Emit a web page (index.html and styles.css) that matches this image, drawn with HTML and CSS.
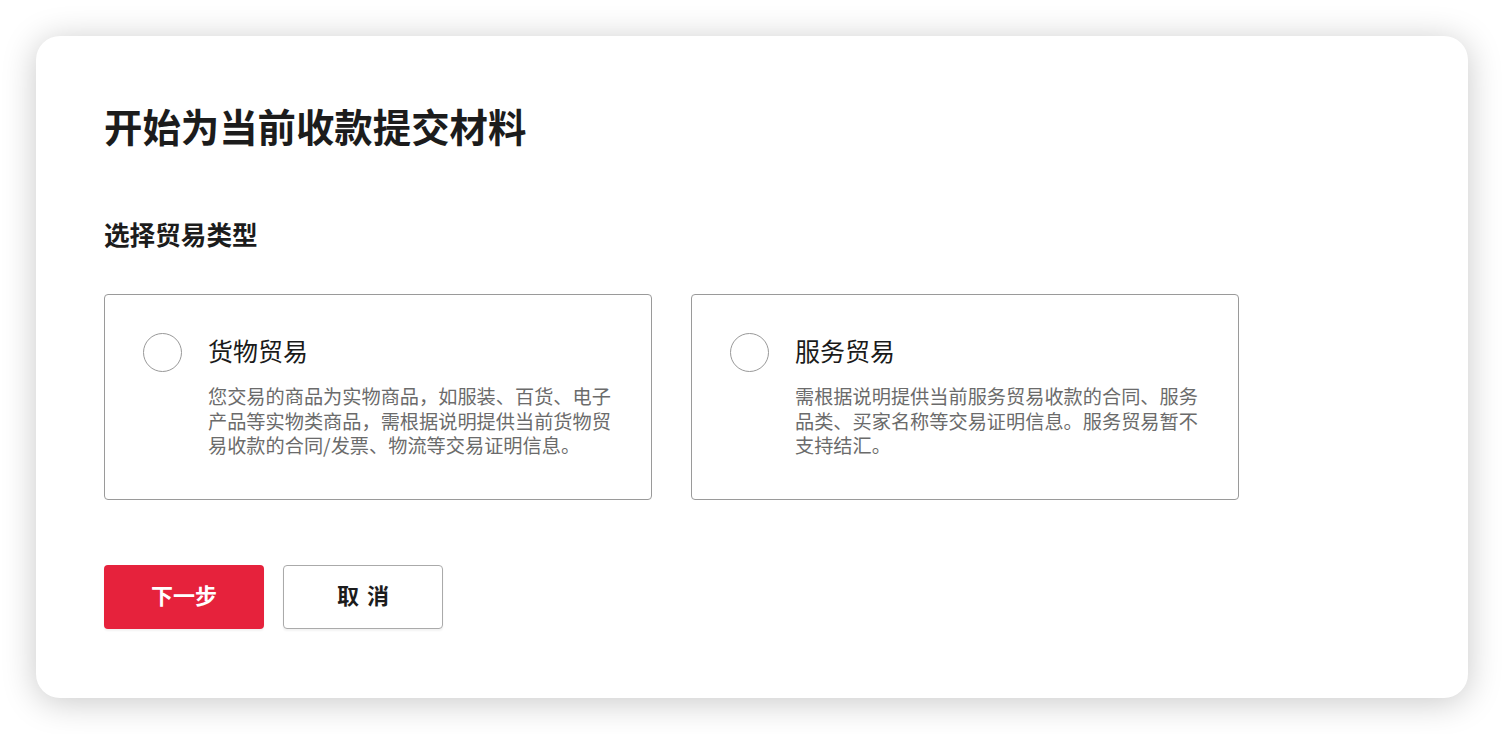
FILE: index.html
```html
<!DOCTYPE html>
<html lang="zh-CN">
<head>
<meta charset="utf-8">
<title>开始为当前收款提交材料</title>
<link rel="stylesheet" href="styles.css">
</head>
<body>
<div class="dialog">
  <h1 class="title">开始为当前收款提交材料</h1>
  <h2 class="subtitle">选择贸易类型</h2>
  <div class="options">
    <label class="option">
      <span class="radio"></span>
      <span class="option-body">
        <span class="option-label">货物贸易</span>
        <span class="option-desc">您交易的商品为实物商品，如服装、百货、电子产品等实物类商品，需根据说明提供当前货物贸易收款的合同/发票、物流等交易证明信息。</span>
      </span>
    </label>
    <label class="option">
      <span class="radio"></span>
      <span class="option-body">
        <span class="option-label">服务贸易</span>
        <span class="option-desc">需根据说明提供当前服务贸易收款的合同、服务品类、买家名称等交易证明信息。服务贸易暂不支持结汇。</span>
      </span>
    </label>
  </div>
  <div class="actions">
    <button class="btn btn-primary">下一步</button>
    <button class="btn btn-default">取 消</button>
  </div>
</div>
</body>
</html>
```

FILE: styles.css
```css
html, body {
  margin: 0;
  padding: 0;
  background: #ffffff;
}
body {
  padding: 36px;
  font-family: "Noto Sans CJK SC", "Noto Sans", sans-serif;
  color: #1a1a1a;
}
.dialog {
  box-sizing: border-box;
  width: 1432px;
  height: 662px;
  background: #ffffff;
  border-radius: 24px;
  box-shadow: 0 4px 34px rgba(0, 0, 0, 0.22);
  padding: 65px 68px 0;
}
.title {
  margin: 0;
  font-size: 38.4px;
  line-height: 48px;
  font-weight: 700;
  color: #1c1c1c;
}
.subtitle {
  margin: 68px 0 0;
  font-size: 25.6px;
  line-height: 34px;
  font-weight: 700;
  color: #1c1c1c;
}
.options {
  display: flex;
  gap: 39px;
  margin-top: 43px;
}
.option {
  box-sizing: border-box;
  width: 548px;
  height: 206px;
  border: 1px solid #9a9a9a;
  border-radius: 4px;
  padding: 38px 16px 0 38px;
  display: flex;
  gap: 26px;
  cursor: pointer;
}
.radio {
  flex: none;
  box-sizing: border-box;
  width: 39px;
  height: 39px;
  border: 1px solid #999;
  border-radius: 50%;
  background: #fff;
}
.option-body {
  display: flex;
  flex-direction: column;
  width: 412px;
}
.option-label {
  font-size: 25px;
  line-height: 35px;
  color: #1a1a1a;
}
.option-desc {
  margin-top: 16px;
  font-size: 19.2px;
  line-height: 24.5px;
  color: #6b6b6b;
}
.actions {
  display: flex;
  gap: 19px;
  margin-top: 65px;
}
.btn {
  box-sizing: border-box;
  width: 160px;
  height: 64px;
  padding: 0 0 6px;
  border-radius: 4px;
  font-family: "Noto Sans CJK SC", "Noto Sans", sans-serif;
  font-size: 22px;
  font-weight: 700;
  cursor: pointer;
  box-shadow: 0 2px 2px rgba(0, 0, 0, 0.05);
}
.btn-primary {
  background: #e6223c;
  border: none;
  color: #ffffff;
}
.btn-default {
  background: #ffffff;
  border: 1px solid #aaaaaa;
  color: #1c1c1c;
  word-spacing: 3px;
}
```
